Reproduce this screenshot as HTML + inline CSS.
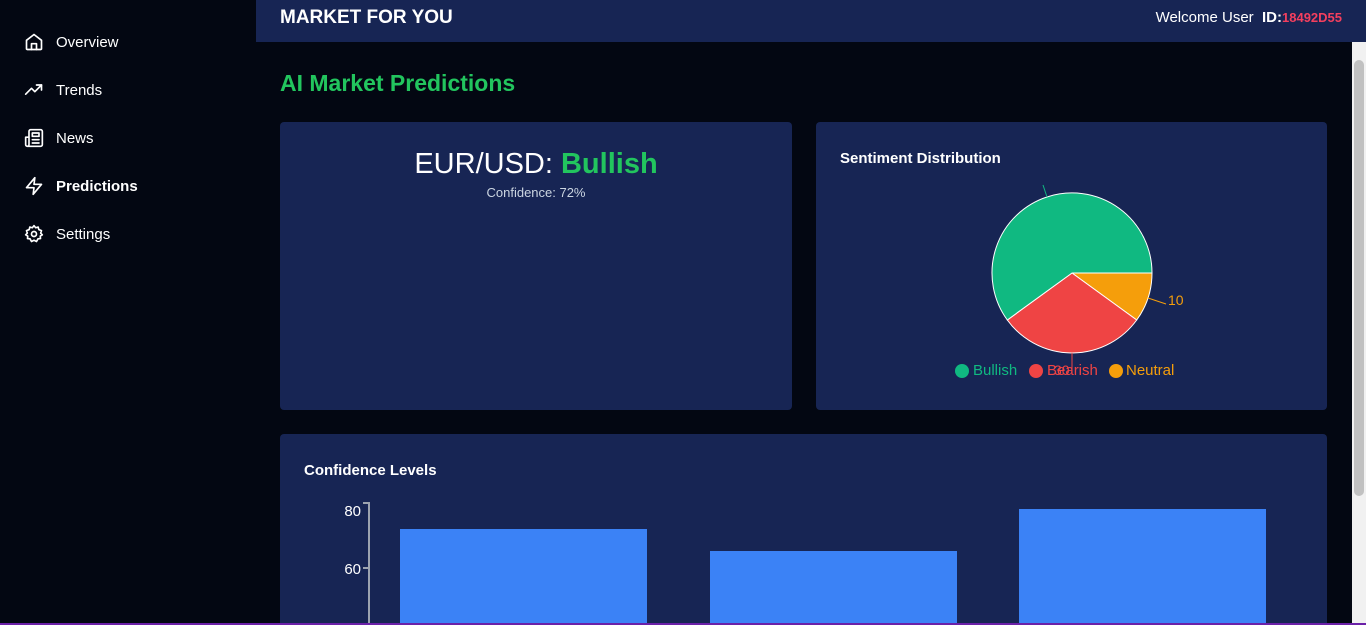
<!DOCTYPE html>
<html><head><meta charset="utf-8">
<style>
*{margin:0;padding:0;box-sizing:border-box}
html,body{width:1366px;height:625px;overflow:hidden}
body{background:#030712;font-family:"Liberation Sans",sans-serif;color:#fff;position:relative}
.side{position:absolute;left:0;top:0;width:256px;height:625px;background:#030712}
.nav{position:absolute;left:24px;display:flex;align-items:center;font-size:15px}
.nav svg{width:20px;height:20px;margin-right:12px;fill:none;stroke:#fff;stroke-width:2;stroke-linecap:round;stroke-linejoin:round}
.hdr{position:absolute;left:256px;top:0;width:1110px;height:42px;background:#172554}
.card{position:absolute;background:#172554;border-radius:4px}
.abs{position:absolute}
</style></head><body>
<div class="side">
 <div class="nav" style="top:32px"><svg viewBox="0 0 24 24"><path d="M3 10l9-7 9 7v10a1 1 0 0 1-1 1H4a1 1 0 0 1-1-1z"/><path d="M9 21v-7h6v7"/></svg>Overview</div>
 <div class="nav" style="top:80px"><svg viewBox="0 0 24 24"><path d="M2 17l7-7 4 4 8-8"/><path d="M15 6h6v6"/></svg>Trends</div>
 <div class="nav" style="top:128px"><svg viewBox="0 0 24 24"><path d="M4 22h16a2 2 0 0 0 2-2V4a2 2 0 0 0-2-2H8a2 2 0 0 0-2 2v16a2 2 0 0 1-4 0V11h4"/><path d="M10 6h8v4h-8zM10 14h8M10 18h8"/></svg>News</div>
 <div class="nav" style="top:176px;font-weight:bold"><svg viewBox="0 0 24 24"><path d="M13 2L3 14h9l-1 8 10-12h-9z"/></svg>Predictions</div>
 <div class="nav" style="top:224px"><svg viewBox="0 0 24 24"><circle cx="12" cy="12" r="3"/><path d="M12 2l2 2.5 3-.8.8 3L21 8l-1 3 2 2-2.5 1.5.3 3-3 .3L15 21l-3-1.5L9 21l-1.8-3.2-3-.3.3-3L2 13l2-2-1-3 3.2-1.3.8-3 3 .8z"/></svg>Settings</div>
</div>
<div class="hdr">
 <div class="abs" style="left:24px;top:7px;font-size:19px;font-weight:bold">MARKET FOR YOU</div>
 <div class="abs" style="right:24px;top:9px;font-size:15px">Welcome User &nbsp;<b>ID:</b><b style="color:#f43f5e;font-size:13px">18492D55</b></div>
</div>
<div class="abs" style="left:1352px;top:42px;width:14px;height:581px;background:#f1f1f1"><div style="position:absolute;left:2px;top:18px;width:10px;height:436px;background:#c1c1c1;border-radius:5px"></div></div>
<div class="abs" style="left:280px;top:70px;font-size:23px;font-weight:bold;color:#22c55e">AI Market Predictions</div>
<div class="card" style="left:280px;top:122px;width:512px;height:288px">
 <div class="abs" style="left:0;width:512px;top:26px;text-align:center;font-size:29px">EUR/USD: <b style="color:#22c55e">Bullish</b></div>
 <div class="abs" style="left:0;width:512px;top:63px;text-align:center;font-size:13px;color:#cbd5e1">Confidence: 72%</div>
</div>
<div class="card" style="left:816px;top:122px;width:511px;height:288px">
 <div class="abs" style="left:24px;top:28px;font-size:15px;font-weight:bold">Sentiment Distribution</div>
</div>
<svg class="abs" style="left:0;top:0" width="1366" height="625">
 <path d="M1072 273L1152 273A80 80 0 0 1 1136.7 320Z" fill="#f59e0b" stroke="#fff" stroke-width="1"/>
 <path d="M1072 273L1136.7 320A80 80 0 0 1 1007.3 320Z" fill="#ef4444" stroke="#fff" stroke-width="1"/>
 <path d="M1072 273L1007.3 320A80 80 0 1 1 1152 273Z" fill="#10b981" stroke="#fff" stroke-width="1"/>
 <line x1="1043" y1="185" x2="1047" y2="197" stroke="#10b981"/>
 <line x1="1148" y1="298" x2="1166" y2="304" stroke="#f59e0b"/>
 <line x1="1072" y1="353" x2="1072" y2="372" stroke="#ef4444"/>
 <text x="1168" y="305" fill="#f59e0b" font-size="14" font-family="Liberation Sans">10</text>
 <text x="1054" y="375" fill="#ef4444" font-size="14" font-family="Liberation Sans">30</text>
 <circle cx="962" cy="371" r="7" fill="#10b981"/><text x="973" y="375" fill="#10b981" font-size="15" font-family="Liberation Sans">Bullish</text>
 <circle cx="1036" cy="371" r="7" fill="#ef4444"/><text x="1047" y="375" fill="#ef4444" font-size="15" font-family="Liberation Sans">Bearish</text>
 <circle cx="1116" cy="371" r="7" fill="#f59e0b"/><text x="1126" y="375" fill="#f59e0b" font-size="15" font-family="Liberation Sans">Neutral</text>
</svg>
<div class="card" style="left:280px;top:434px;width:1047px;height:191px;border-radius:4px 4px 0 0">
 <div class="abs" style="left:24px;top:28px;font-size:15px;font-weight:bold">Confidence Levels</div>
</div>
<svg class="abs" style="left:0;top:0" width="1352" height="625">
 <path d="M363 503H369V625M363 568H369" stroke="#9ca3af" stroke-width="2" fill="none"/>
 <text x="361" y="516" fill="#fff" font-size="15" text-anchor="end" font-family="Liberation Sans">80</text>
 <text x="361" y="574" fill="#fff" font-size="15" text-anchor="end" font-family="Liberation Sans">60</text>
 <rect x="400" y="529" width="247" height="100" fill="#3b82f6"/>
 <rect x="710" y="551" width="247" height="80" fill="#3b82f6"/>
 <rect x="1019" y="509" width="247" height="120" fill="#3b82f6"/>
</svg>
<div class="abs" style="left:0;top:623px;width:1366px;height:2px;background:#6b21a8"></div>
</body></html>
